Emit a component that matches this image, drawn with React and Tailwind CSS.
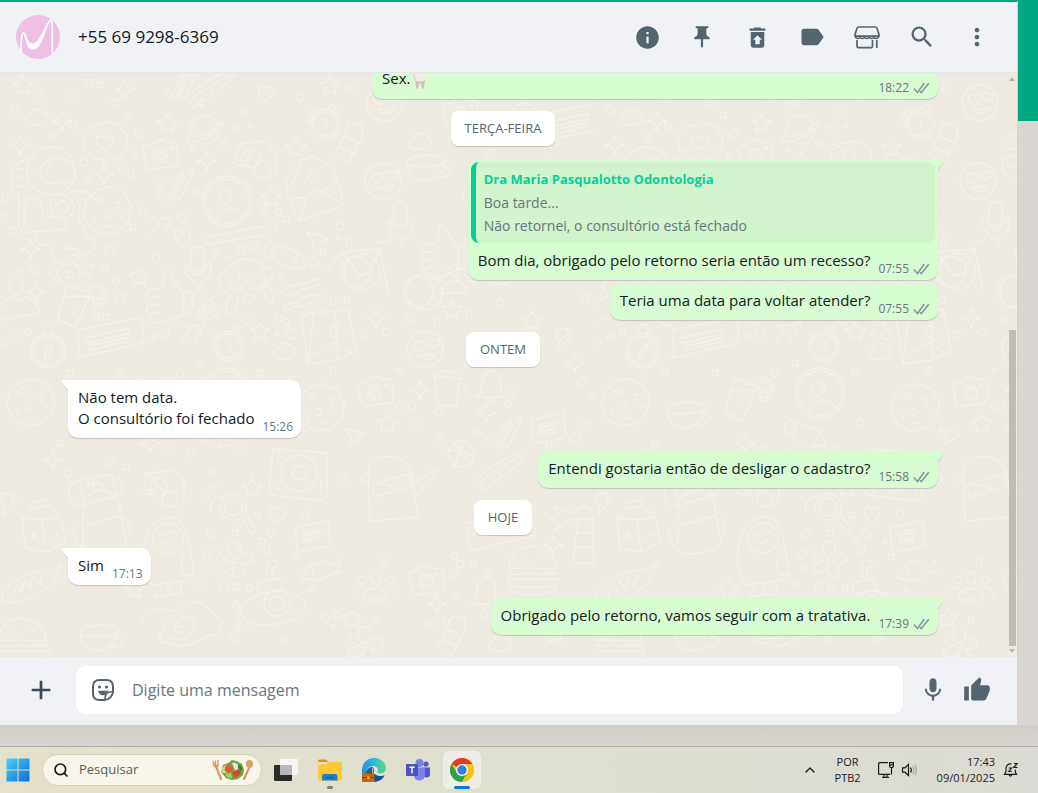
import { useState } from 'react';
import {
  MdInfo,
  MdPushPin,
  MdRestoreFromTrash,
  MdLabel,
  MdSearch,
  MdMoreVert,
  MdAdd,
  MdMic,
  MdThumbUp,
} from 'react-icons/md';
import { ChevronUp, Search } from 'lucide-react';

/* ---------- wallpaper ---------- */

// every doodle is drawn around 0,0
const SHAPES = {
  star: 'M0-9L3-3 10-2 5 3 6 9 0 6-6 9-5 3-10-2-3-3Z',
  spark: 'M0-10Q1-1 10 0 1 1 0 10-1 1-10 0-1-1 0-10Z',
  heart: 'M0 8C-10 1-9-7-4-7-1-7 0-4 0-4S2-8 6-6C11-3 7 4 0 8Z',
  cloud: 'M-9 7C-14 3-10-3-6-3-5-10 5-9 6-4 13-4 12 5 7 6 2 9-3 9-9 7Z',
  planet: 'M-13 3A13 13 0 0 1 12-6M13-1A13 13 0 0 1-8 11M12-6C19-9 20-5 15-1 8 5-6 12-15 11-21 10-17 4-12 1M-12 7C-2 6 9 1 14-5',
  camera: 'M-15-9L-8-10-5-14 4-15 7-12 14-13 17-11 18 8 15 11-11 14-14 12-17-6ZM0-6A7 7 0 1 1 0 8A7 7 0 1 1 0-6M0-3A4 4 0 1 1 0 5A4 4 0 1 1 0-3M10-8h2v2h-2z',
  ticks: 'M-18 9L-15 6-8 12 6-13 9-12-6 17ZM0 10L16-16 19-15 5 15-1 12',
  avatar: 'M0-25A25 25 0 1 1 0 25A25 25 0 1 1 0-25M0-22A22 22 0 1 1 0 22A22 22 0 1 1 0-22M-2-10A6 6 0 1 1-2 3A6 6 0 1 1-2-10M-10 19C-7 5 9 3 15 14',
  astronaut:
    'M4-58A24 24 0 1 1 4-10A24 24 0 1 1 4-58M-7-30C-7-44 4-49 22-45 28-40 31-27 26-23 14-25-5-15-7-30M-1-34L4-41M-19-45C-36-45-42-20-29-11M-34-28h8M-31-36h7M-30-19h7M-28-12C-28 8-30 34-20 27L12 25C22 24 20 12 14 11L-4 11-6-1C-12-14-24-4-23 4L-23 25M-12 28C-12 42-2 40 4 40 2 64 26 62 32 54L30 44C20 44 14 44 22 40M25 50C50 52 54 36 40 32L34 18M24-12C36-5 30 10 33 18M15-10A12 12 0 1 1 15 14A12 12 0 1 1 15-10M15-4A6 6 0 1 1 15 8A6 6 0 1 1 15-4M22-14L40-13 48-5',
  cookie: 'M0-24C7-26 9-20 15-20 21-18 19-12 23-8 27-2 22 2 22 7 22 14 16 14 13 19 8 24 4 20-1 23-7 24-9 19-14 18-20 16-18 10-22 6-26 0-21-4-21-9-20-15-14-15-11-20-7-24-3-21 0-24M-12-12l6-2 2 3-6 3zM-4 2a3 3 0 1 1 1 5M8-8a3 3 0 1 1 1 5M14 6l3-3M-2 16l7-1M-14 6l3 6',
  seal: 'M0-19C5-23 8-16 13-17 18-16 15-11 20-9 25-6 20-1 23 2 25 8 18 7 17 12 14 18 9 14 5 18 0 22-3 15-8 17-14 17-12 11-18 9-24 6-19 1-22-3-24-9-17-9-16-13-12-19-7-14 0-19M0 8C-12 1-10-6-5-6-1-6 0-3 0-3S3-7 6-6C11-3 8 4 0 8Z',
  envelope: 'M-29-9L-17-29-2-34 19-21 28 12 24 18-16 31-27 7ZM-26 8L-9 8 4 0 28 14M-9 8L-15 30M-23-4L-14-26M19-21L22-10 8 1M-11-7l8-13M-6-5l7-13',
  glasses: 'M-14-2A9 9 0 1 1-14-1M-7-1A9 9 0 0 1-22 3M-6-4L2 4M6 2A8 8 0 1 1 6 18A8 8 0 1 1 6 2M-21-15L8-19 15-14M14 16L20 12 20-8 15-12M-19-8A6 6 0 1 0-8-4A6 6 0 1 0-19-8',
  pencil: 'M-20-7L-16-13 14-2 21 12 6 14-21 0ZM-10-10L-16 2M-8-9L-12 4M14-2L8 13',
  mic: 'M-1-21C7-23 8-13 7-2 6 5-5 5-6-2-7-12-6-20-1-21M-12-2L-9-3C-8 10 9 10 10-5L14-4C15 8 8 14 4 13L5 22 2 23 0 13C-7 13-12 7-12-2',
  thumb: 'M-7-8C3-12-4-26 1-28 8-29 6-18 14-11L19-2 18 16C8 20 4 25-10 25-16 24-16 18-15 16-20 14-19 9-17 7-21 4-20-3-16-5-18-10-12-10-7-8M-16-1L-5-1M-17 7L-5 6M-15 16L-6 14M19-7L26-6C28 2 28 10 26 15L18 17',
  note: 'M-32-8L28-20C32-20 33-16 34 0 34 4 32 5 28 6L-24 18-34 20-31 14ZM-24 0L16-9C20-9 20-5 17-4L-22 5C-26 4-26 1-24 0M-20 8L16 0C20 1 19 4 16 4L-20 12C-23 11-22 9-20 8',
  bar: 'M-28 2L24-8C32-9 33-2 28 0L-24 9C-31 10-32 3-28 2M-22 5h1M-14 3h1M-7 2h1M1 1h1',
  arrow: 'M-11 4L3-11 10 6 6 8 2-3-3 16-6 15-2-1-9 7Z',
  plane: 'M-11-8L11-2 -5 9-4 2Z',
  quotes: 'M-10-6A5 5 0 1 1-4 1L-9 7M3-8A5 5 0 1 1 9 0L5 6',
  drink: 'M-11-14L13-6-3 28-20 20ZM-14-2L11-3M8-12A12 12 0 1 1 15 8M9-8A9 9 0 1 1 15 5M15-7V5M10-1H23M-5 6h1M-1 2h1M2 7h1M-4 14h1',
  person: 'M0-20A8 8 0 1 1 0-4A8 8 0 1 1 0-20M-18 22C-20 4-8-2-3-2L3 3 8-2C16 0 23 8 23 14Z',
  map: 'M-27-18L-14-23 7-23 20-26 28 16 10 25-20 29ZM-14-23L-20 29M7-23L10 25M-18 22L28-6M6 8L22 17M2-7a5 5 0 0 1 9 0L6 4Z',
  watch: 'M0-15A15 15 0 1 1 0 15A15 15 0 1 1 0-15M0-12A12 12 0 1 1 0 12A12 12 0 1 1 0-12M-1-6L2-1-1 5M4-17l4-3 4 2-3 3M-15-11l3-4',
  compass: 'M0-14A17 17 0 1 1 0 20A17 17 0 1 1 0-14M0-11A14 14 0 1 1 0 17A14 14 0 1 1 0-11M0-24A5 5 0 1 1 0-14A5 5 0 1 1 0-24M-4 12L-1 0 5-5 2 7Z',
  can: 'M-12 10L2-22 14-20 16-10 2 18ZM-8 2L8 9M-2-8L13-2',
  shepherd: 'M-20-8C-28-12-26 2-23 7L-14 15C-22 26-19 38-10 32L-7 16M-20-8C-12-24 12-28 19-12 28-18 30-4 22 3L18 8C24 24 30 26 27 12L22 3M-17-9C-20 6-8 15-2 4L0-3C4 14 22 10 20-4M-2 18C2 22 10 20 10 14H2ZM-14-6l2 8M-8-10l3 8M6-8l4 6M12-9l3 5',
  squiggle: 'M-20-2C-14-4-12-12-6-8L18-15C22-14 20-10 16-9L-1-3C-8 4-14 3-20-2M-17 12L-1 8C4 0 12 4 16 0L22 2C20 8 14 6 9 10 2 14 0 10-15 16Z',
  bike: 'M-30 0A18 18 0 1 1-30 1M-33 0A15 15 0 1 1-33 1M32 20A18 18 0 1 1 32 21M29 20A15 15 0 1 1 29 21M-49 0L-31-19-15 5-5 2 6-22-31-19M6-22L14 20M4-28L14-30 18-36',
  milk: 'M-20-12L-10-22 6-24 18-13 24 12 4 22-17 18ZM-20-12L0-10 18-13M0-10L4 22M-10-22L-9-28 5-30 6-24M-8 2C-13 10-3 11-8 2M9 8L17 3',
  backpack: 'M-31-22C-36-33 14-44 20-34 26-22 23-18 17-17L-24-6C-28-8-30-16-31-22M-20-28L-16-10M12-37L17-17M-17-5C-14-28 16-30 20-5L26 30C20 40-8 44-17 38ZM-18 12C-34 16-24 34-17 35M22 5C34 6 32 22 26 24M-14 12L20 3M-8-24A6 6 0 1 1 4-24',
  penguin: 'M-24 20C-30-10-16-38 2-36 20-36 22-8 26 22L20 27-16 32ZM0-30A15 15 0 1 1 0 0A15 15 0 1 1 0-30M-8-18q3-3 5 0M3-20q3-3 5 0M-4-12q4 6 8-1M20 4C12-2 12 18 17 23L27 20M-8 32L-14 44 0 42 0 32M4 30L2 42 14 40 12 28',
  turntable: 'M-26-26L28-22 28 20 24 26-27 20-30 16ZM0-20A18 18 0 1 1 0 16A18 18 0 1 1 0-20M0-9A7 7 0 1 1 0 5A7 7 0 1 1 0-9M16-8L22 6 22 18M-22-16l3-5 3 5-3 6zM-22 12h2v2h-2z',
  flower: 'M-4-4C-16-22 12-24 4-4 22-14 22 8 6 3 18 20-8 22-1 6-14 22-26 4-6 1-24-6-12-20-4-4M0-3A3 3 0 1 1 0 3A3 3 0 1 1 0-3',
  burger: 'M-25-3C-24-34 22-30 22-2L-25-3M-25-3C-30 4-14 5-10 2S2 6 6 3 20 6 24 0M-26 8L25 8 22 16-24 16ZM-23 16C-24 28 22 26 22 16M-10-13h2M2-17h2M9-11h2M-2-9h1',
  bread: 'M-28 10C-32-2 12-26 26-16 32-8 6 12-14 14-22 16-27 15-28 10M-17 9L-14-2-8 4-6-7 0 1 3-11 10-3 12-14',
  magnifier: 'M0-13A13 13 0 1 1 0 13A13 13 0 1 1 0-13M0-9A9 9 0 1 1 0 9A9 9 0 1 1 0-9M8 10L18 26C22 26 24 23 22 21L12 6M-22 4C-25-10-13-13-9-9M-28-6A3 4 0 1 1-22-6M-26-16A3 4 0 1 1-20-17M-16-20A3 4 0 1 1-10-20',
  submarine: 'M-34 4C-26-16 16-22 30-4 34 10 10 22-22 18-30 16-35 12-34 4M2-16A13 13 0 1 1 2 10A13 13 0 1 1 2-16M2-10A7 7 0 1 1 2 4A7 7 0 1 1 2-10M-18-15L-16-23 4-28 8-17M-8-26V-44L2-46 2-40-3-38V-28M-36 8L-42-2-39-6-35 4M-36 14L-41 24-36 25-34 15',
  fish: 'M-20 8C-16-6 2-14 11-4L20-11 15 0 20 2 10 3C0 14-14 10-20 8M-10-2Q-6 4-11 9M-15 4h1',
  lighthouse: 'M-11 28L-6-16H8L10 28ZM-8-16V-24Q0-32 8-24V-16M-10-16H11M-8-2H9M-10 12H10M-12-22L-30-28-24-20-34-16-24-12-30-4-12-16',
  bell: 'M-16 12L-10 8C-10-6-6-13 0-14 8-14 10-4 10 8L14 12ZM0-14V-19h4v5M-4 14q4 5 8 0',
  mug: 'M-16-12L10-10 6 18-12 17ZM-16-12C-14-20 12-18 10-10M7-4C20-8 20 10 7 10',
  ball: 'M0-13A13 13 0 1 1 0 13A13 13 0 1 1 0-13M-12-4Q2-4 8 10M-8-10Q4 0 12 2M4-12Q-4 0-6 12',
  pizza: 'M-22 8C-8-6 8-16 22-18 26-14 20-8 12-2L-16 20ZM-18 9L18-14M-10 8l2 4M0 1l2 4M8-5l2 3',
  saw: 'M-28-18C-24-36 14-36 16-10L22 30-26 34ZM-24-2L14-14 14 0-22 10ZM-14-3L4 3M16-2L38-18C42-18 40-12 36-10L20 8',
  card: 'M-34-6L30-20 36 6-30 22ZM-22 4V0q3-4 5 0v5q-2 4-5-1M-12 4L20-5',
  letter: 'M-17-8L0-12 16-16 18 10-8 15-15 14ZM-9-3L8-7 8-4-9 0ZM-8 4L6 1 6 4-8 7Z',
  bolt: 'M-5-10L6-9 3-2 9-3-6 12-2 1-8 1Z',
  cup: 'M-20-8C-22-16 18-20 18-10 18-4-18-2-20-8C-20 16 16 16 18-10M16-4C28-8 26 8 12 6',
  face: 'M0-18A18 18 0 1 1 0 18A18 18 0 1 1 0-18M-6 2C-14-3-12-9-8-8-5-8-5-6-5-6S-1-10 0-6C1-3-2 0-6 2M8-1C1-5 3-11 6-10 9-10 9-8 9-8S12-11 14-8C15-5 12-3 8-1M-8 7Q2 14 11 5Z',
  people: 'M0-18A5 6 0 1 1 0-6A5 6 0 1 1 0-18M-13 10C-12-6 10-6 12 10ZM-14-14A4 4 0 1 1-14-6A4 4 0 1 1-14-14M14-14A4 4 0 1 1 14-6A4 4 0 1 1 14-14M-22 6C-22-2-16-4-13-2M22 6C22-2 16-4 13-2',
  hands: 'M-40 4C-30-16-6-4-4-6 6-20 22-18 34-2L42 4 38 18C26 16 24 22 12 26-6 34-6 24-12 26-26 28-22 14-16 12-22 2-8-4-4 6-2-2 16-4 14 12 6 26-6 20-10 22M-3 17C-10 11-5 6-3 11 0 6 6 11-3 17',
};

// [shape, x, y] over one tile
const DOODLES = [
  ['star', 23, 12], ['spark', 125, 16], ['spark', 62, 48], ['cloud', 37, 44], ['planet', 205, 57],
  ['seal', 105, 69], ['camera', 160, 82], ['star', 167, 50], ['spark', 20, 72], ['spark', 104, 101],
  ['astronaut', 47, 132], ['cookie', 107, 138], ['ticks', 175, 112], ['avatar', 227, 128], ['spark', 207, 88],
  ['glasses', 256, 87], ['envelope', 315, 117], ['star', 296, 74], ['star', 271, 124], ['watch', 325, 51],
  ['heart', 266, 20], ['can', 347, 72], ['bar', 235, 162], ['heart', 182, 165], ['quotes', 159, 154],
  ['pencil', 285, 182], ['plane', 317, 167], ['mic', 197, 195], ['shepherd', 245, 208], ['thumb', 165, 225],
  ['arrow', 208, 236], ['star', 85, 194], ['star', 139, 203], ['spark', 31, 176], ['spark', 36, 219],
  ['drink', 78, 226], ['person', 16, 226], ['squiggle', 300, 221], ['map', 328, 262], ['note', 110, 265],
  ['quotes', 190, 261], ['watch', 229, 273], ['star', 260, 258], ['compass', 48, 275], ['bike', 374, 198],
  ['cloud', 285, 278], ['spark', 376, 245], ['bell', 491, 312], ['mug', 450, 315], ['camera', 375, 319],
  ['spark', 420, 317], ['face', 425, 276], ['star', 452, 236], ['star', 532, 247], ['bolt', 563, 265],
  ['people', 455, 210], ['letter', 548, 355], ['ticks', 503, 359], ['star', 387, 350], ['ball', 461, 381],
  ['pizza', 500, 398], ['spark', 486, 340], ['saw', 396, 414], ['plane', 355, 363], ['turntable', 299, 402],
  ['spark', 53, 386], ['spark', 575, 290], ['glasses', 164, 416], ['backpack', 100, 440], ['milk', 42, 457],
  ['magnifier', 233, 434], ['heart', 277, 441], ['star', 252, 414], ['letter', 312, 463], ['flower', 235, 487],
  ['penguin', 168, 480], ['fish', 322, 497], ['submarine', 275, 533], ['people', 376, 517], ['camera', 426, 508],
  ['bell', 486, 519], ['spark', 437, 531], ['star', 352, 545], ['hands', 181, 544], ['burger', 534, 498],
  ['card', 500, 456], ['lighthouse', 584, 462], ['bread', 30, 515], ['spark', 553, 472], ['bolt', 8, 430],
  ['star', 134, 515], ['flower', 365, 572], ['cup', 92, 345], ['cookie', 30, 330], ['spark', 150, 370],
  ['pencil', 210, 360], ['face', 385, 30], ['camera', 460, 40], ['planet', 525, 45], ['note', 570, 50],
  ['cup', 427, 98], ['face', 383, 108], ['cloud', 420, 68], ['mic', 400, 150], ['heart', 470, 125],
  ['envelope', 535, 140], ['thumb', 440, 180], ['milk', 500, 190], ['spark', 560, 190], ['ticks', 180, 10],
  ['pizza', 210, 16], ['star', 330, 12], ['drink', 150, 320], ['cookie', 320, 335], ['avatar', 225, 320],
  ['burger', 24, 570], ['cup', 100, 568], ['can', 450, 565], ['cloud', 500, 570], ['star', 555, 560],
];

// loose bubbles between the doodles
const DOTS = [
  [15, 37, 4], [73, 53, 3], [53, 64, 3], [39, 22, 4], [70, 23, 4], [89, 9, 3], [128, 42, 3], [139, 60, 4],
  [84, 89, 4], [134, 82, 2], [121, 95, 3], [131, 101, 3], [88, 106, 3], [5, 125, 3], [2, 144, 4], [13, 158, 4],
  [161, 111, 3], [143, 138, 4], [182, 145, 5], [133, 154, 3], [110, 178, 5], [156, 186, 4], [53, 199, 4],
  [34, 198, 3], [20, 200, 3], [58, 207, 3], [70, 202, 3], [105, 196, 3], [116, 209, 3], [121, 226, 5], [97, 244, 3],
  [106, 244, 3], [224, 70, 3], [236, 55, 3], [251, 53, 2], [193, 76, 2], [195, 120, 2], [264, 137, 3], [278, 139, 3],
  [286, 146, 3], [272, 154, 4], [216, 180, 3], [229, 185, 2], [241, 177, 4], [254, 174, 4], [314, 189, 4],
  [281, 202, 2], [323, 179, 3], [340, 153, 4], [339, 165, 2], [349, 169, 3], [247, 248, 4], [277, 260, 2],
  [279, 245, 3], [291, 261, 5], [286, 249, 3], [333, 229, 3], [347, 227, 3], [165, 260, 4], [154, 264, 2],
  [28, 259, 3], [16, 263, 3], [2, 270, 4], [362, 262, 4], [387, 259, 4], [333, 297, 3], [399, 297, 2], [409, 246, 3],
  [437, 249, 3], [469, 241, 3], [400, 332, 4], [412, 332, 4], [439, 339, 4], [416, 353, 4], [440, 365, 3],
  [477, 360, 3], [512, 320, 3], [508, 331, 3], [581, 309, 4], [592, 322, 3], [586, 352, 4], [575, 365, 5],
  [549, 373, 3], [550, 390, 2], [343, 406, 4], [365, 405, 4], [68, 400, 4], [91, 408, 3], [126, 394, 3],
  [168, 377, 4], [191, 381, 3], [213, 400, 3], [257, 442, 3], [305, 442, 4], [211, 460, 4], [235, 460, 3],
  [207, 481, 4], [208, 496, 2], [271, 460, 4], [290, 468, 2], [262, 468, 3], [267, 477, 3], [296, 484, 3],
  [311, 517, 2], [224, 514, 4], [236, 514, 3], [250, 515, 3], [201, 512, 2], [454, 483, 3], [460, 491, 4],
  [473, 490, 3], [454, 502, 3], [456, 524, 3], [326, 546, 4], [336, 541, 3], [333, 554, 2], [376, 547, 3],
  [430, 551, 3], [446, 549, 3], [484, 542, 4], [384, 489, 3], [234, 566, 3], [283, 566, 3], [60, 493, 2],
  [120, 300, 3], [180, 300, 4], [200, 290, 3], [260, 300, 3], [70, 300, 3], [60, 370, 3], [110, 390, 3],
  [240, 375, 3], [265, 350, 4], [100, 12, 3], [115, 30, 4], [200, 30, 3], [245, 40, 2], [300, 24, 4], [310, 46, 3],
  [350, 15, 3], [490, 80, 3], [550, 90, 4], [580, 110, 3], [500, 230, 4], [585, 225, 4], [480, 160, 3],
];

function Wallpaper() {
  return (
    <svg className="absolute inset-0 h-full w-full" aria-hidden="true">
      <defs>
        <pattern id="doodles" width="595" height="590" patternUnits="userSpaceOnUse">
          <g
            fill="none"
            stroke="#f5f2eb"
            strokeWidth="1.4"
            strokeLinecap="round"
            strokeLinejoin="round"
          >
            {DOODLES.map(([shape, x, y], i) => (
              <path key={i} d={SHAPES[shape]} transform={`translate(${x} ${y})`} />
            ))}
            {DOTS.map(([x, y, r], i) => (
              <circle key={i} cx={x} cy={y} r={r} />
            ))}
          </g>
        </pattern>
      </defs>
      <rect width="100%" height="100%" fill="url(#doodles)" />
    </svg>
  );
}

/* ---------- small drawings ---------- */

const Avatar = () => (
  <svg viewBox="0 0 44 44" className="size-11 shrink-0">
    <circle cx="22" cy="22" r="22" fill="#efbfe6" />
    <path
      d="M4.800 37C5.200 26 5.500 17.800 7.500 17.800C9.500 17.800 10.500 31 17 31C24 31 29.500 10 34 5.500C36 4.500 36.300 8 36.300 12V39"
      fill="none"
      stroke="#fff"
      strokeWidth="1.700"
    />
    <path d="M8.500 19.500C11 26 13.500 28.500 17 28.500C22 28.500 28 14 33.500 6.500C29 17 25 34.500 17 34.500C11 34.500 10 27 8.500 19.500Z" fill="#fff" />
  </svg>
);

const Storefront = () => (
  <svg viewBox="0 0 26 24" className="h-6 w-[26px]" fill="none" stroke="#54656f" strokeWidth="1.700">
    <path d="M4.500 2H21.500Q22.500 2 23 3.200L25 9.500V11.200H1V9.500L3 3.200Q3.500 2 4.500 2Z" strokeLinejoin="round" />
    <path d="M1.500 11.500a2.300 2 0 0 0 4.600 0a2.300 2 0 0 0 4.600 0a2.300 2 0 0 0 4.600 0a2.300 2 0 0 0 4.600 0a2.300 2 0 0 0 4.600 0" strokeWidth="1.500" />
    <path d="M3 15V21.200Q3 22.700 4.500 22.700H16.500Q18.500 22.700 18.500 21V15M22.800 15V23" />
  </svg>
);

const Sticker = () => (
  <svg viewBox="0 0 24 24" className="size-6" fill="none" stroke="#54656f" strokeWidth="2">
    <path d="M8.500 2H15.500Q22 2 22 8.500V14C22 18 17.500 22 13.500 22H8.500Q2 22 2 15.500V8.500Q2 2 8.500 2Z" />
    <path d="M21.500 14C16 13.500 14 16 14 21.500" strokeWidth="1.600" />
    <circle cx="8.500" cy="9" r="1.600" fill="#54656f" stroke="none" />
    <circle cx="15.500" cy="9" r="1.600" fill="#54656f" stroke="none" />
    <path d="M7 12.800H18C17.500 14 15 14.500 14 17C10.500 18 7.500 16 7 12.800Z" fill="#54656f" stroke="none" />
  </svg>
);

const DoubleCheck = () => (
  <svg viewBox="0 0 17 12" className="h-3 w-[17px]" fill="none" stroke="#8696a0" strokeWidth="1.600">
    <path d="M0.800 6.500L4.500 10.500L11.200 1.200M7 9.200L8.300 10.500L15.800 1.200" />
  </svg>
);

const Tooth = () => (
  <svg viewBox="0 0 16 20" className="ml-0.5 inline-block h-5 w-4 align-middle">
    <path
      d="M2.500 2C5 0.500 7 2 8 2C9 2 11 0.500 13.500 2C16 4 15 8 13 11C12.500 14 12.500 19 10.500 19C9 19 9.500 13 8 13C6.500 13 7 19 5.500 19C3.500 19 4 14 3.300 11C1 8 0 4 2.500 2Z"
      fill="#f3ece6"
    />
    <path d="M3.300 10C6 12 10 12 13 10C12.500 14 12.500 19 10.500 19C9 19 9.500 13 8 13C6.500 13 7 19 5.500 19C3.500 19 4 14 3.300 10Z" fill="#cfc3b8" />
    <path d="M2.500 3C1.500 5 2 8 3.500 10" stroke="#d8cdc4" fill="none" />
  </svg>
);

/* ---------- chat ---------- */

const DayChip = ({ children }) => (
  <div className="mt-3 self-center rounded-lg bg-white px-3.5 py-[7px] text-[13px] leading-[21px] text-[#54656f] shadow-[0_1px_1px_rgba(11,20,26,0.18)]">
    {children}
  </div>
);

const Tail = ({ out }) => (
  <svg
    viewBox="0 0 8 13"
    className={
      out
        ? 'absolute top-0 -right-[7px] h-[13px] w-2'
        : 'absolute top-0 -left-[7px] h-[13px] w-2 -scale-x-100'
    }
  >
    <path d="M0 1H6.500Q8 1.500 7 3L1 12Z" fill="#0b141a" opacity="0.130" />
    <path d="M0 0H6.500Q8.500 0.500 7 2.500L0 11.500Z" fill={out ? '#d9fdd3' : '#ffffff'} />
  </svg>
);

function Bubble({ out, tail, follow, wide, time, quote, children }) {
  return (
    <div
      className={[
        'relative flex max-w-full flex-col rounded-[10px] shadow-[0_1px_1px_rgba(11,20,26,0.18)]',
        out ? 'self-end bg-[#d9fdd3]' : 'self-start bg-white',
        follow ? 'mt-[3px]' : 'mt-[13px]',
        tail && out ? 'rounded-tr-none' : '',
        tail && !out ? 'rounded-tl-none' : '',
        wide ? 'w-[566px]' : '',
      ].join(' ')}
    >
      {tail && <Tail out={out} />}
      {quote && (
        <div className="mx-[3px] mt-[3px] overflow-hidden rounded-lg border-l-[5px] border-[#06cf9c] bg-[#d1f4cc] px-2 py-1.5 text-sm leading-[23px]">
          <p className="text-[13px] font-bold text-[#06cf9c]">{quote.author}</p>
          {quote.lines.map((line) => (
            <p key={line} className="text-[#667781]">
              {line}
            </p>
          ))}
        </div>
      )}
      <div className="flex items-end justify-between gap-2 pt-[7px] pr-2 pb-1 pl-2.5">
        <div className="pb-[5px] text-[15px] leading-[21px] text-[#111b21]">{children}</div>
        <div className="flex items-center gap-1 text-xs leading-[14px] text-[#667781]">
          {time}
          {out && <DoubleCheck />}
        </div>
      </div>
    </div>
  );
}

const HEADER_ACTIONS = [
  ['Dados do contato', <MdInfo className="size-[27px]" />],
  ['Fixar', <MdPushPin className="size-[26px]" />],
  ['Arquivar', <MdRestoreFromTrash className="size-[27px]" />],
  ['Etiquetar', <MdLabel className="size-7" />],
  ['Catálogo', <Storefront />],
  ['Pesquisar', <MdSearch className="size-7" />],
  ['Mais opções', <MdMoreVert className="size-7" />],
];

function Header() {
  return (
    <header className="flex h-[71px] shrink-0 items-center border-b border-[#e4e6e8] bg-[#f0f2f6] pr-[26px] pl-4">
      <Avatar />
      <h1 className="ml-[18px] flex-1 text-[17px] text-[#111b21]">+55 69 9298-6369</h1>
      <div className="flex gap-[27px] text-[#54656f]">
        {HEADER_ACTIONS.map(([label, icon]) => (
          <button key={label} aria-label={label} className="flex size-7 items-center justify-center">
            {icon}
          </button>
        ))}
      </div>
    </header>
  );
}

function Messages() {
  return (
    <main className="relative flex min-h-0 flex-1 bg-[#efeae2]">
      <Wallpaper />
      <div className="relative flex min-w-0 flex-1 flex-col justify-end overflow-hidden pr-[69px] pb-[22px] pl-[68px]">
        <Bubble out wide time="18:22">
          Sex.
          <Tooth />
        </Bubble>
        <DayChip>TERÇA-FEIRA</DayChip>
        <Bubble
          out
          tail
          time="07:55"
          quote={{
            author: 'Dra Maria Pasqualotto Odontologia',
            lines: ['Boa tarde...', 'Não retornei, o consultório está fechado'],
          }}
        >
          Bom dia, obrigado pelo retorno seria então um recesso?
        </Bubble>
        <Bubble out follow time="07:55">
          Teria uma data para voltar atender?
        </Bubble>
        <DayChip>ONTEM</DayChip>
        <Bubble tail time="15:26">
          Não tem data.
          <br />O consultório foi fechado
        </Bubble>
        <Bubble out tail time="15:58">
          Entendi gostaria então de desligar o cadastro?
        </Bubble>
        <DayChip>HOJE</DayChip>
        <Bubble tail time="17:13">
          Sim
        </Bubble>
        <Bubble out tail time="17:39">
          Obrigado pelo retorno, vamos seguir com a tratativa.
        </Bubble>
      </div>
      {/* scrollbar */}
      <div className="relative flex w-2.5 flex-col items-center justify-between py-1">
        <svg viewBox="0 0 6 4" className="h-1 w-1.5">
          <path d="M0 4L3 0L6 4Z" fill="#b8b5b0" />
        </svg>
        <div className="flex w-full flex-1 flex-col items-center justify-end pb-[3px]">
          <div className="h-[56%] w-[7px] bg-[#c0bdb8]" />
        </div>
        <svg viewBox="0 0 6 4" className="h-1 w-1.5">
          <path d="M0 0L3 4L6 0Z" fill="#b8b5b0" />
        </svg>
      </div>
    </main>
  );
}

function Composer() {
  const [text, setText] = useState('');
  return (
    <footer className="flex h-[68px] shrink-0 items-center bg-[#f0f2f6] pr-[26px] pb-0.5 pl-[25px] text-[#54656f]">
      <button aria-label="Anexar" className="text-[#3b4a54]">
        <MdAdd className="size-8" />
      </button>
      <div className="ml-[19px] flex h-12 flex-1 items-center rounded-[10px] bg-white px-[15px]">
        <button aria-label="Figurinhas">
          <Sticker />
        </button>
        <input
          aria-label="Digite uma mensagem"
          placeholder="Digite uma mensagem"
          value={text}
          onChange={(e) => setText(e.target.value)}
          className="ml-[17px] min-w-0 flex-1 bg-transparent text-base text-[#111b21] outline-none placeholder:text-[#667781]"
        />
      </div>
      <button aria-label="Gravar áudio" className="ml-4">
        <MdMic className="size-7" />
      </button>
      <button aria-label="Curtir" className="ml-4">
        <MdThumbUp className="size-7" />
      </button>
    </footer>
  );
}

/* ---------- taskbar ---------- */

const WindowsLogo = () => (
  <svg viewBox="0 0 24 24" className="size-6">
    <defs>
      <linearGradient id="win" x1="0" y1="0" x2="1" y2="1" gradientUnits="objectBoundingBox">
        <stop offset="0" stopColor="#4fd0fb" />
        <stop offset="1" stopColor="#0a6fd0" />
      </linearGradient>
    </defs>
    <path d="M0.500 0.500H11.500V11.500H0.500ZM12.500 0.500H23.500V11.500H12.500ZM0.500 12.500H11.500V23.500H0.500ZM12.500 12.500H23.500V23.500H12.500Z" fill="url(#win)" />
  </svg>
);

const Salad = () => (
  <svg viewBox="0 0 42 22" className="h-[22px] w-[42px]">
    <path d="M3 5L9 20M38 7L32 20" stroke="#d69a68" strokeWidth="2.200" strokeLinecap="round" />
    <path d="M1 2L2 7Q4 9 6 7L6 1M3.500 1.500V7" stroke="#d69a68" strokeWidth="1.300" fill="none" />
    <ellipse cx="37.500" cy="5" rx="3.600" ry="4" fill="#dba26f" />
    <path d="M9 13L11 6L16 4L20 1L25 2L30 5L32 11L31 16L26 20L20 21L14 19Z" fill="#6fa83a" />
    <path d="M10 9Q14 4 17 8L15 14L10 14Z" fill="#c9dc7a" />
    <path d="M13 12Q12 5 18 6L22 10L17 14Z" fill="#e4573d" />
    <path d="M20 4Q26 3 27 9L23 12Z" fill="#eadcf0" />
    <path d="M20 14Q23 10 29 12Q28 18 22 18Z" fill="#d9452f" />
    <path d="M13 15L19 14L20 19L15 18Z" fill="#a9cf5a" />
    <path d="M26 5L31 9L29 12L26 9Z" fill="#3f7f2a" />
  </svg>
);

const TaskView = () => (
  <svg viewBox="0 0 24 24" className="size-6">
    <rect x="0" y="7" width="18" height="16" rx="1" fill="#2b2b2b" />
    <rect x="6" y="1" width="18" height="16" rx="1" fill="#f6f6f6" />
    <path d="M6 7H18V17H6Z" fill="#b9b9b9" />
  </svg>
);

const Folder = () => (
  <svg viewBox="0 0 24 24" className="size-6">
    <path d="M0 3Q0 1.500 1.500 1.500H8L10.500 4H0Z" fill="#d99a12" />
    <path d="M0 6.500H8.500L10.500 4H22.500Q24 4 24 5.500V21Q24 22.500 22.500 22.500H1.500Q0 22.500 0 21Z" fill="#ffc933" />
    <path d="M4 22.500V18Q4 16 6 16H17.500Q19.500 16 19.500 18V22.500Z" fill="#1780d0" />
    <path d="M8 19.500H15.500" stroke="#0a5596" strokeWidth="1.200" />
  </svg>
);

const Edge = () => (
  <svg viewBox="0 0 24 24" className="size-6">
    <defs>
      <linearGradient id="edge" x1="0" y1="0.400" x2="1" y2="0.400">
        <stop offset="0" stopColor="#1f8fdc" />
        <stop offset="0.600" stopColor="#35c1cf" />
        <stop offset="1" stopColor="#66dd5a" />
      </linearGradient>
    </defs>
    <path d="M0 13C0 5 5 0 12 0C19 0 24 5 24 10C24 15 19 16.500 15.500 14.500C17 11 15 8 11 8C5 8 4 14 5 18L0 18Z" fill="url(#edge)" />
    <path d="M5 18C3 12 7 8.500 11 9C8 13 11 20 22 18C19 23 12 25 8 23Z" fill="#1261ae" />
    <path d="M11.500 9.500C9.500 12 11 17 17 18C20 18.500 22 17.500 22.500 17C21 21 18 23.500 12 23.500V14Z" fill="#0f5097" />
    <rect x="0" y="15.500" width="12.500" height="8.500" rx="1" fill="#c06a10" />
    <path d="M3.500 15.500V14.200H9V15.500" stroke="#8a4708" fill="none" />
    <path d="M0 19.500H12.500" stroke="#8a4708" strokeWidth="1" />
    <rect x="5.300" y="18.600" width="2" height="2.200" fill="#ffd24a" />
  </svg>
);

const Teams = () => (
  <svg viewBox="0 0 24 24" className="size-6">
    <circle cx="13.500" cy="5" r="4" fill="#7b83eb" />
    <circle cx="20" cy="6" r="2.600" fill="#5059c9" />
    <path d="M16 9.500H24V16Q24 19.500 20.500 19.500Q17 19.500 16 17Z" fill="#5059c9" />
    <path d="M8 9.500H19V17Q18.500 22.500 13.500 22.500Q9 22.500 8 18Z" fill="#7b83eb" />
    <rect x="0" y="6" width="12" height="12" rx="1" fill="#4b53bc" />
    <path d="M3.500 9.200H8.500M6 9.200V15.200" stroke="#fff" strokeWidth="1.500" />
  </svg>
);

const Chrome = () => (
  <svg viewBox="0 0 24 24" className="size-6">
    <circle cx="12" cy="12" r="12" fill="#fbc116" />
    <path d="M12 12L1.600 6A12 12 0 0 1 22.400 6Z" fill="#e33b2e" />
    <path d="M1.600 6A12 12 0 0 0 12 24L17.200 15L12 12L6.800 15Z" fill="#2ba24c" />
    <path d="M12 6H22.400A12 12 0 0 1 12 24L17.200 15Z" fill="#fbc116" />
    <circle cx="12" cy="12" r="6" fill="#fff" />
    <circle cx="12" cy="12" r="4.700" fill="#2f7de1" />
  </svg>
);

const Network = () => (
  <svg viewBox="0 0 18 18" className="size-[18px]" fill="none" stroke="#1b1b1b" strokeWidth="1.200">
    <path d="M11 1.600H2.600Q1.600 1.600 1.600 2.600V12.400Q1.600 13.400 2.600 13.400H13M5 16.400H12M7 13.400V16.400M10 13.400V16.400" />
    <path d="M12.600 1.600H16.400V5.400L15.600 6.500H13.400L12.600 5.400ZM14.500 6.500V13.500M12.600 3.800H16.400" />
  </svg>
);

const Speaker = () => (
  <svg viewBox="0 0 18 16" className="h-4 w-[18px]" fill="none" stroke="#1b1b1b" strokeWidth="1.200">
    <path d="M1.500 5.800H4L7.500 2.500V13.500L4 10.200H1.500ZM9.500 5.500Q11.200 8 9.500 10.500" />
    <path d="M11.700 4Q14 8 11.700 12M13.800 2.500Q17 8 13.800 13.500" stroke="#a9a9a0" />
  </svg>
);

const BellSnooze = () => (
  <svg viewBox="0 0 16 16" className="size-4" fill="none" stroke="#1b1b1b" strokeWidth="1.200">
    <path d="M8.500 2C5 1.500 3 3.500 3 6.500V9.500L1.500 12.300H13.500L12.300 10V7.500M6 12.800Q7.400 15.300 9 12.800" />
    <path d="M5.800 6H8.600L5.800 9.500H8.800M10.800 1.500H14.200L10.800 5.500H14.400" />
  </svg>
);

const APPS = [
  ['Visão de tarefas', <TaskView />, ''],
  ['Explorador de Arquivos', <Folder />, 'w-1.5 bg-[#7d7b75]'],
  ['Edge', <Edge />, ''],
  ['Teams', <Teams />, ''],
  ['Chrome', <Chrome />, 'w-4 bg-[#0a78d4]'],
];

function Taskbar() {
  return (
    <nav className="flex h-[47px] shrink-0 items-center border-t border-[#b1aea8] bg-linear-to-r from-[#e6dfc9] via-[#dedfd0] to-[#dbdad4] pr-[19px] pl-1.5 text-[#1b1b1b]">
      <button aria-label="Iniciar">
        <WindowsLogo />
      </button>
      <label className="ml-3 flex h-8 w-[220px] items-center rounded-full border border-[#d6cfb9] bg-[#f8f5ea] pr-[7px] pl-2.5">
        <Search className="size-4 shrink-0" strokeWidth={2.5} />
        <input
          aria-label="Pesquisar"
          placeholder="Pesquisar"
          className="ml-2.5 min-w-0 flex-1 bg-transparent text-[13px] outline-none placeholder:text-[#5d5b55]"
        />
        <Salad />
      </label>
      <div className="ml-[5px] flex gap-1.5">
        {APPS.map(([label, icon, mark]) => (
          <button
            key={label}
            aria-label={label}
            className={
              label === 'Chrome'
                ? 'relative flex size-[38px] items-center justify-center rounded-md bg-[#efeee6]'
                : 'relative flex size-[38px] items-center justify-center'
            }
          >
            {icon}
            {mark && <span className={`absolute bottom-0 h-[3px] rounded-full ${mark}`} />}
          </button>
        ))}
      </div>
      <div className="ml-auto flex items-center text-[11px] leading-4">
        <button aria-label="Ícones ocultos">
          <ChevronUp className="size-4" />
        </button>
        <button className="ml-[17px] text-center">
          POR
          <br />
          PTB2
        </button>
        <button aria-label="Rede e som" className="ml-4 flex items-center gap-1.5">
          <Network />
          <Speaker />
        </button>
        <button className="ml-[18px] text-right">
          17:43
          <br />
          09/01/2025
        </button>
        <button aria-label="Notificações" className="ml-2">
          <BellSnooze />
        </button>
      </div>
    </nav>
  );
}

export default function App() {
  return (
    <div className="flex h-screen flex-col bg-[#dad6d2] font-['Open_Sans','Noto_Sans',sans-serif]">
      <div className="flex min-h-0 flex-1 bg-[linear-gradient(#00a884_121px,#d9d5d1_121px)]">
        <section className="flex min-w-0 flex-1 flex-col border-t-2 border-r border-t-[#00a884] border-r-[#ced3d6]">
          <Header />
          <Messages />
          <Composer />
        </section>
        <div className="w-5 shrink-0" />
      </div>
      <div className="h-[21px] shrink-0 bg-linear-to-b from-[#d1cdc9] to-[#d9d5d1]" />
      <Taskbar />
    </div>
  );
}
